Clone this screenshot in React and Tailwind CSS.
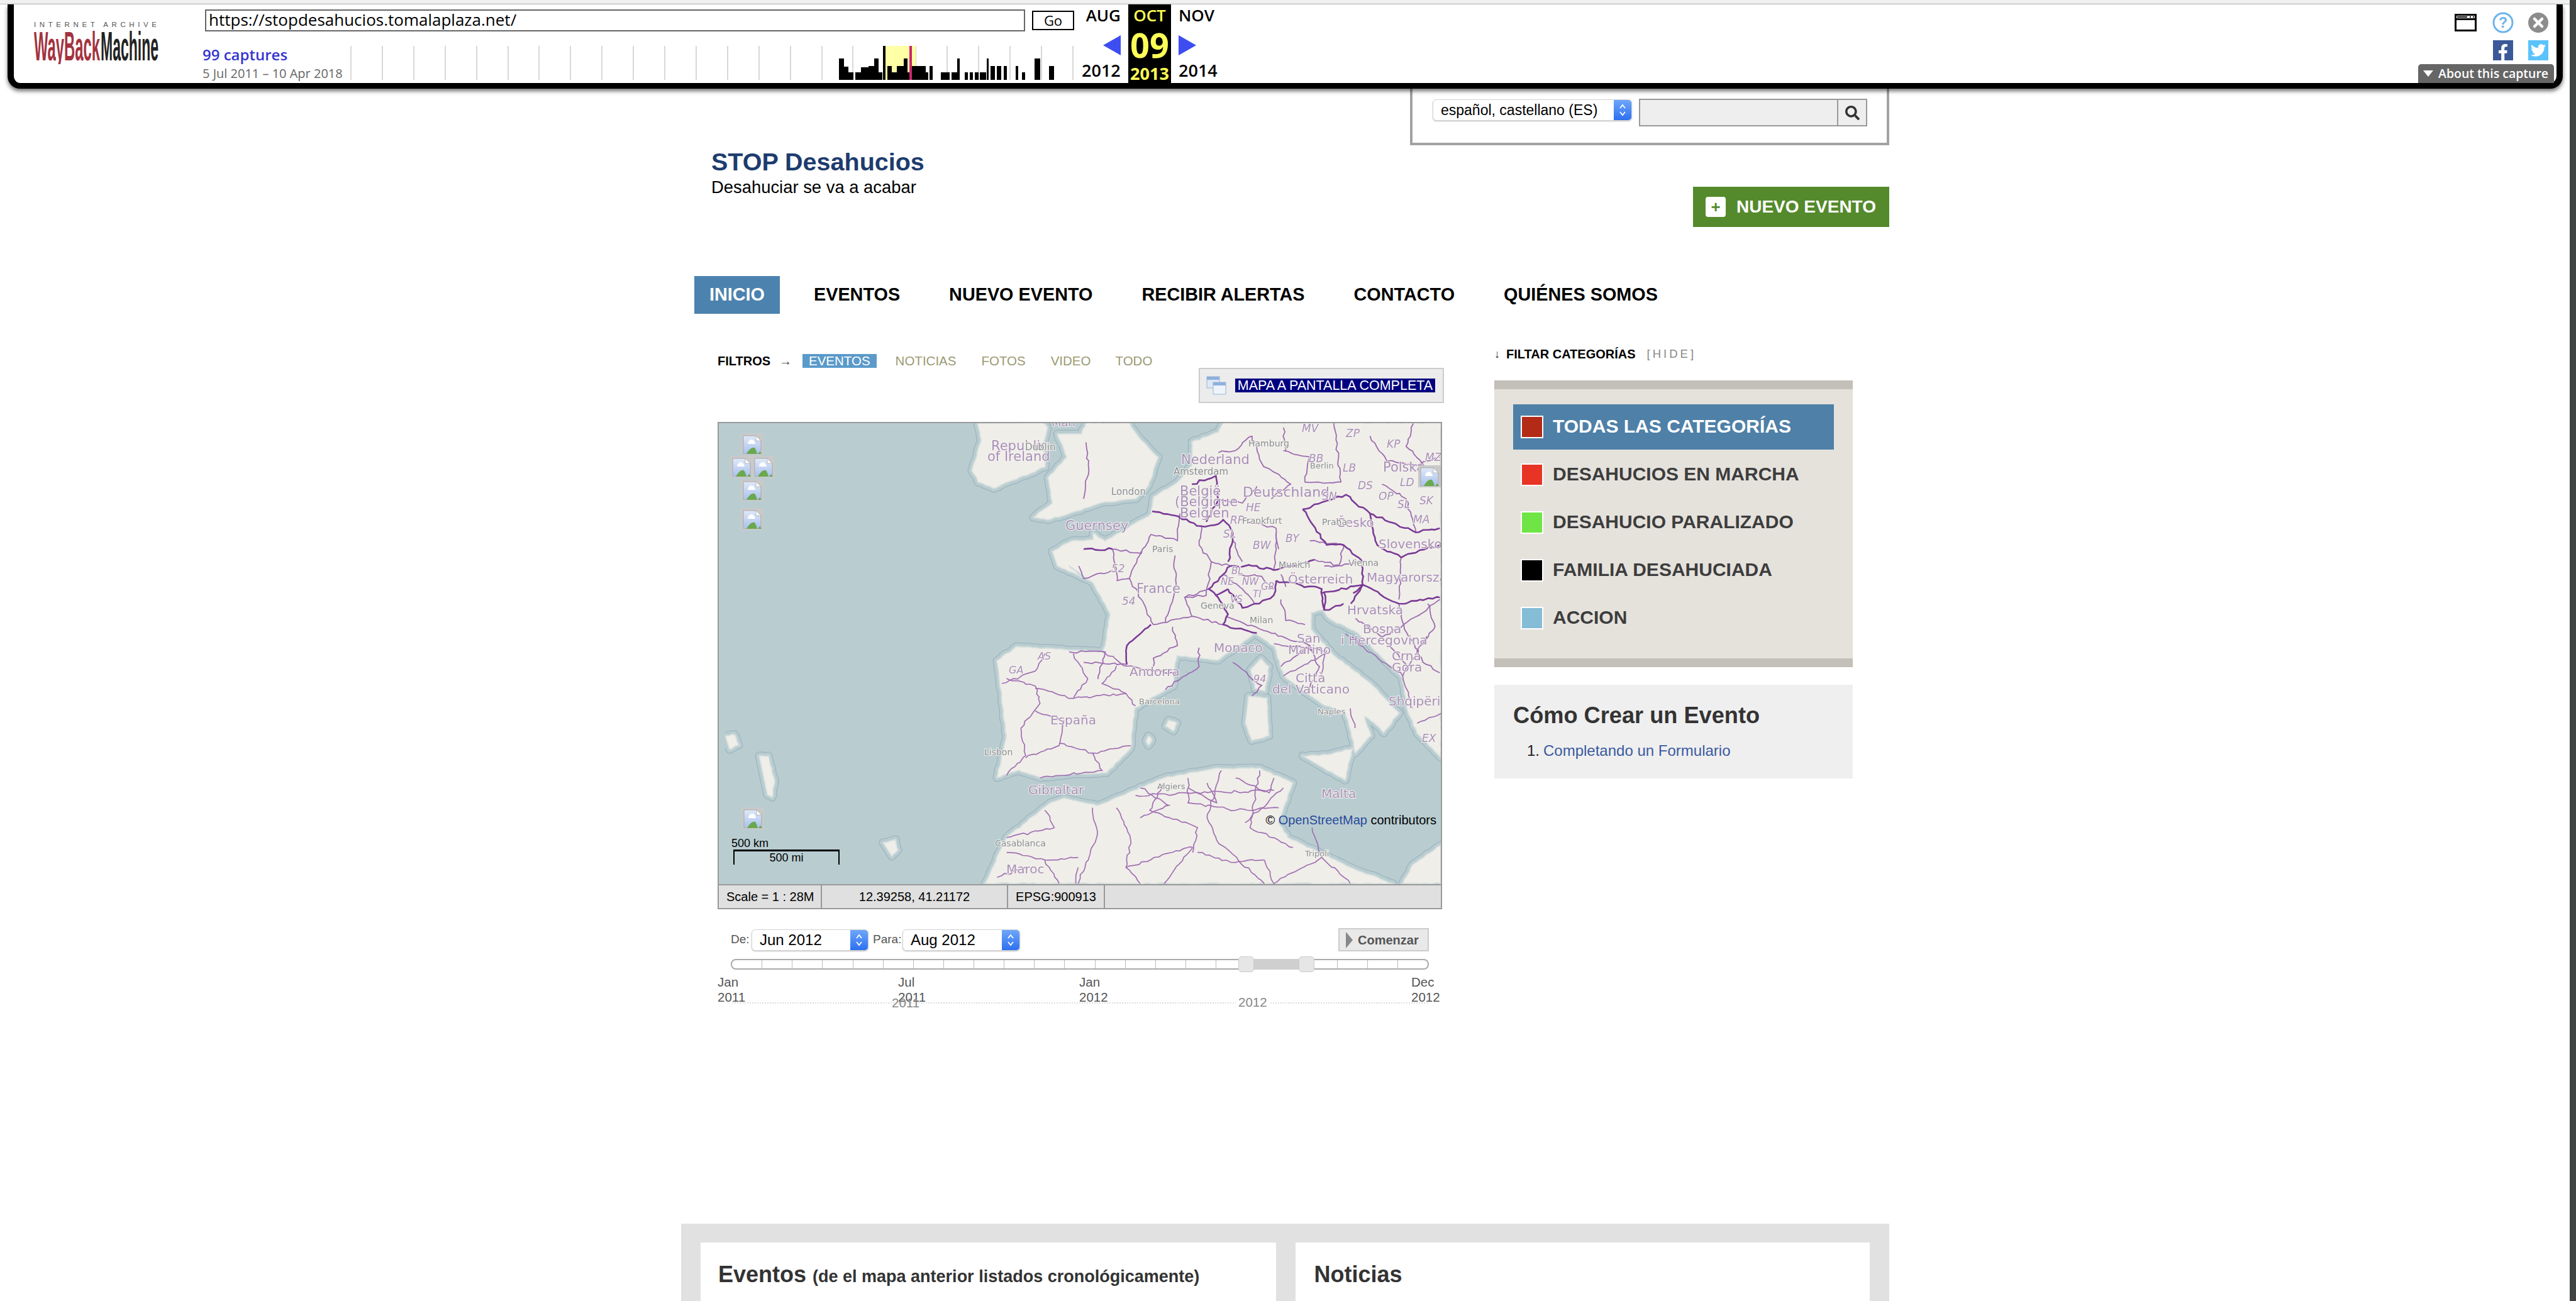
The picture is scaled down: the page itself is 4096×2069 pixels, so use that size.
import { FaFacebookF, FaTwitter, FaSearch } from "react-icons/fa";

const SERIF_FREE = "font-['Liberation_Sans',Arial,sans-serif]";
const TOOLBAR_FONT = "font-['Open_Sans',sans-serif]";

const crop10 = (x, y) => [1700 + x / 2.613, 660 + y / 3];
const crop7 = (x, y) => [1130 + x / 1.3176, 1000 + y / 2.53];

// jagged line through the points, so borders look like the rendered tiles
const wiggle = (pts, seed, amp = 4, closed = false) => {
  let r = (seed * 7919 + 13) % 233280;
  const rnd = () => {
    r = (r * 9301 + 49297) % 233280;
    return r / 233280 - 0.5;
  };
  let d = `M${pts[0][0].toFixed(1)} ${pts[0][1].toFixed(1)}`;
  for (let i = 1; i < pts.length; i++) {
    const [ax, ay] = pts[i - 1];
    const [bx, by] = pts[i];
    const n = Math.max(1, Math.ceil(Math.hypot(bx - ax, by - ay) / 7));
    for (let k = 1; k <= n; k++) {
      const t = k / n;
      const j = k === n ? 0 : amp;
      d += `L${(ax + (bx - ax) * t + rnd() * j).toFixed(1)} ${(ay + (by - ay) * t + rnd() * j).toFixed(1)}`;
    }
  }
  return closed ? d + "Z" : d;
};

const pairs = (arr, fn) => {
  const out = [];
  for (let i = 0; i < arr.length; i += 2) out.push(fn(arr[i], arr[i + 1]));
  return out;
};

const land = [
  // ireland
  [[1554, 673], [1560, 700], [1545, 748], [1555, 767], [1580, 777], [1627, 757], [1662, 743], [1660, 703], [1666, 680], [1658, 672]],
  // britain
  [[1681, 690], [1696, 727], [1666, 760], [1673, 800], [1643, 823], [1666, 827], [1700, 817], [1750, 800], [1807, 793], [1826, 773], [1842, 727], [1815, 700], [1796, 672], [1727, 672], [1719, 690]],
  // continent with spain and italy
  [[1673, 877], [1704, 860], [1738, 858], [1738, 847], [1757, 860], [1788, 843], [1830, 817], [1834, 790], [1872, 767], [1895, 740], [1895, 703], [1937, 687], [1945, 672], [2291, 672], [2291, 1205], [2253, 1166], [2238, 1130], [2230, 1079], [2192, 1040], [2159, 1007], [2115, 985], [2102, 970], [2085, 975], [2085, 1000], [2119, 1040], [2180, 1087], [2225, 1134], [2200, 1166], [2185, 1150], [2170, 1140], [2180, 1170], [2155, 1198], [2148, 1165], [2139, 1134], [2101, 1119], [2041, 1075], [2026, 1028], [1995, 1008], [1937, 1050], [1872, 1043], [1868, 1063], [1866, 1091], [1805, 1126], [1798, 1190], [1760, 1229], [1700, 1232], [1654, 1237], [1620, 1225], [1585, 1237], [1600, 1170], [1585, 1051], [1616, 1028], [1680, 1032], [1752, 1036], [1757, 1027], [1765, 977], [1738, 927], [1700, 900], [1723, 920], [1681, 900]],
  // corsica, sardinia, sicily
  [[2005, 1047], [2018, 1060], [2012, 1099], [1995, 1095], [1988, 1065]],
  [[1985, 1107], [2015, 1110], [2018, 1170], [1990, 1178], [1980, 1150]],
  [[2071, 1202], [2110, 1200], [2151, 1190], [2139, 1241], [2105, 1222]],
  // balearics
  [[1858, 1145], [1872, 1150], [1866, 1163], [1853, 1155]],
  [[1826, 1170], [1832, 1176], [1826, 1186], [1822, 1178]],
  // north africa
  [[1669, 1277], [1600, 1332], [1566, 1405], [2215, 1405], [2147, 1379], [2048, 1332], [2033, 1308], [2056, 1245], [2003, 1221], [1930, 1222], [1851, 1237], [1745, 1281], [1692, 1269]],
  [[2291, 1344], [2246, 1375], [2230, 1405], [2291, 1405]],
];

const islands = [
  [[1153, 1170], [1168, 1168], [1175, 1185], [1160, 1192]],
  [[1207, 1202], [1222, 1202], [1232, 1240], [1228, 1268], [1220, 1264]],
  [[1404, 1340], [1424, 1335], [1428, 1352], [1418, 1362]],
];

const majorBorders = [
  [345, 460, 440, 480, 500, 510, 550, 530, 620, 520, 640, 500, 680, 560, 680, 600, 660, 700],
  [510, 330, 610, 290, 620, 400, 570, 510],
  [670, 720, 760, 720, 850, 740, 1020, 690],
  [670, 720, 580, 830, 610, 860, 660, 830],
  [660, 830, 720, 920, 790, 900, 850, 860, 860, 790],
  [970, 450, 1070, 620, 1140, 620, 1220, 700, 1220, 810, 1050, 850],
  [970, 450, 1100, 400, 1150, 380, 1250, 470, 1280, 620, 1380, 680, 1540, 620],
  [1250, 470, 1440, 560, 1540, 540],
  [860, 790, 1050, 830, 1060, 930],
  [1220, 810, 1370, 900, 1540, 870],
  [610, 860, 660, 950, 640, 1000, 780, 1040],
  [240, 1190, 240, 1100, 340, 1000],
  [1060, 850, 1060, 930, 1140, 900],
  [1180, 850, 1220, 810, 1170, 900],
  [60, 640, 180, 640],
];

const minorBorders = [
  [180, 640, 300, 660, 340, 570, 450, 600, 460, 470],
  [180, 640, 200, 790, 250, 780, 300, 880, 350, 1000, 510, 960, 480, 870, 580, 830],
  [300, 650, 250, 780],
  [440, 670, 440, 830, 400, 990],
  [430, 1010, 450, 1100, 350, 1160, 350, 1200],
  [550, 530, 540, 620, 590, 700, 670, 720],
  [590, 700, 570, 860, 480, 870],
  [510, 960, 640, 1000],
  [760, 100, 800, 230, 920, 330, 840, 400],
  [890, 170, 1000, 200, 980, 320, 1130, 320],
  [620, 400, 720, 420, 780, 340],
  [740, 510, 860, 540, 870, 640],
  [680, 600, 720, 700],
  [850, 740, 860, 560],
  [1100, 40, 1130, 320],
  [1250, 100, 1320, 220, 1440, 240, 1540, 200],
  [1300, 330, 1400, 400, 1440, 560],
  [1190, 970, 1300, 1060, 1390, 1000, 1540, 880],
  [1370, 900, 1390, 1000, 1470, 1180, 1540, 1230],
  [1300, 1060, 1400, 1190],
  [790, 1020, 1000, 1100, 880, 1200],
  [790, 1020, 650, 960],
  [1000, 1100, 1040, 1200, 1000, 1300],
  [880, 880, 900, 980, 980, 1000],
  [40, 720, 60, 780, 180, 740],
  [70, 130, 80, 240, 60, 400],
  [760, 100, 690, 170, 620, 180],
  [890, 60, 900, 170],
  [1000, 600, 1140, 620, 1120, 720, 1060, 720],
  [1020, 690, 1130, 720, 1200, 700],
  [1380, 680, 1370, 880],
  [880, 760, 900, 820],
  [700, 760, 800, 770, 840, 830],
  [640, 760, 720, 830, 770, 900],
  [1430, 40, 1400, 150, 1490, 260, 1540, 300],
  [1490, 900, 1520, 1010, 1460, 1100],
  [0, 1130, 150, 1130, 120, 1260],
  [240, 1190, 60, 1180],
  [540, 1110, 540, 1200, 400, 1310],
  [680, 1180, 800, 1290, 760, 1340],
];

const spainAfrica = [
  [820, 90, 870, 150, 975, 180],
  [620, 200, 680, 230, 690, 300, 650, 400, 660, 510, 620, 590],
  [700, 100, 680, 170, 610, 220],
  [680, 240, 760, 280, 870, 260, 890, 310],
  [680, 330, 740, 370, 730, 470, 660, 520],
  [730, 460, 800, 500, 880, 470],
  [800, 500, 820, 570, 690, 600],
  [870, 260, 820, 220, 850, 150],
  [760, 100, 790, 200, 760, 280],
  [1180, 60, 1290, 90, 1280, 180],
  [1290, 100, 1230, 160, 1200, 190],
  [1340, 320, 1350, 400],
  [1330, 20, 1450, 190, 1470, 320],
  [1500, 30, 1450, 190],
  [1480, 380, 1530, 340],
  [800, 720, 810, 830, 770, 1025],
  [700, 730, 720, 800, 620, 840],
  [850, 720, 880, 850, 870, 960, 900, 1025],
  [950, 620, 920, 730, 1020, 800, 1010, 900],
  [1070, 570, 1040, 760, 1060, 850, 1160, 1025],
  [1150, 570, 1130, 800, 1220, 880],
  [1000, 600, 1000, 700, 1100, 730, 1190, 720],
  [890, 670, 1180, 650],
  [870, 960, 1000, 880, 1010, 880],
  [1020, 900, 1090, 940, 1160, 930],
  [1200, 640, 1120, 780],
  [620, 900, 700, 930, 770, 920],
  [700, 930, 730, 1025],
  [950, 1025, 1010, 880],
  [1160, 930, 1180, 1025, 1280, 920],
  [770, 960, 765, 1025],
  [900, 640, 960, 710, 900, 760],
  [1000, 640, 1060, 700, 1040, 620],
  [1100, 600, 1170, 660, 1180, 600],
  [1260, 800, 1280, 920, 1340, 1025],
  [600, 1000, 660, 960],
];

// text, x, y, size, style: c country, g city, i region
const labels = [
  ["Republic", 1576, 716, 21, "c"], ["of Ireland", 1570, 733, 21, "c"], ["Dublin", 1630, 716, 15, "g"], ["Man", 1672, 678, 18, "c"],
  ["Guernsey", 1694, 843, 21, "c"], ["London", 1767, 787, 15, "g"], ["Nederland", 1878, 738, 21, "c"], ["Amsterdam", 1866, 755, 15, "g"],
  ["België", 1876, 788, 21, "c"], ["(Belgique", 1868, 805, 21, "c"], ["Belgien", 1876, 823, 21, "c"], ["Deutschland", 1976, 790, 22, "c"],
  ["Hamburg", 1985, 710, 14, "g"], ["BB", 2081, 735, 17, "i"], ["Berlin", 2083, 745, 13, "g"], ["ZP", 2140, 695, 17, "i"], ["KP", 2205, 712, 17, "i"],
  ["MZ", 2266, 733, 17, "i"], ["MV", 2070, 687, 17, "i"], ["Polska", 2199, 750, 21, "c"], ["LD", 2226, 773, 17, "i"], ["DS", 2159, 778, 17, "i"], ["OP", 2192, 795, 17, "i"],
  ["SL", 2222, 808, 17, "i"], ["SK", 2257, 802, 17, "i"], ["MA", 2247, 832, 17, "i"], ["LB", 2135, 750, 17, "i"], ["HE", 1981, 813, 17, "i"], ["RP", 1956, 833, 17, "i"],
  ["Frankfurt", 1975, 833, 14, "g"], ["SL", 1945, 855, 17, "i"], ["BW", 1992, 873, 17, "i"], ["BY", 2044, 862, 17, "i"], ["SN", 2102, 795, 17, "i"],
  ["Česko", 2125, 838, 20, "c"], ["Praha", 2102, 835, 14, "g"], ["Slovensko", 2192, 872, 20, "c"], ["Magyarország", 2173, 925, 20, "c"],
  ["Österreich", 2048, 928, 20, "c"], ["Munich", 2033, 903, 14, "g"], ["Vienna", 2144, 900, 14, "g"], ["Paris", 1832, 878, 14, "g"], ["France", 1807, 943, 21, "c"],
  ["52", 1767, 910, 17, "i"], ["54", 1784, 962, 17, "i"], ["Geneva", 1909, 968, 14, "g"], ["Milan", 1987, 991, 14, "g"], ["BL", 1958, 913, 15, "i"],
  ["NE", 1941, 930, 15, "i"], ["NW", 1975, 930, 15, "i"], ["GR", 2005, 938, 15, "i"], ["VS", 1956, 958, 15, "i"], ["TI", 1992, 950, 15, "i"],
  ["Hrvatska", 2142, 977, 20, "c"], ["Bosna", 2167, 1007, 20, "c"], ["i Hercegovina", 2132, 1025, 20, "c"], ["Crna", 2213, 1050, 20, "c"], ["Gora", 2213, 1068, 20, "c"],
  ["San", 2062, 1022, 20, "c"], ["Marino", 2048, 1040, 20, "c"], ["Monaco", 1930, 1037, 20, "c"], ["Andorra", 1796, 1075, 20, "c"], ["Città", 2060, 1085, 20, "c"],
  ["del Vaticano", 2023, 1103, 20, "c"], ["94", 1993, 1085, 16, "i"], ["Barcelona", 1811, 1120, 13, "g"], ["Shqipëria", 2208, 1122, 20, "c"], ["España", 1670, 1152, 20, "c"],
  ["Lisbon", 1565, 1201, 14, "g"], ["GA", 1604, 1071, 16, "i"], ["AS", 1650, 1049, 16, "i"], ["Naples", 2095, 1136, 13, "g"], ["Gibraltar", 1635, 1263, 20, "c"],
  ["Malta", 2101, 1269, 20, "c"], ["Algiers", 1840, 1255, 13, "g"], ["Casablanca", 1582, 1346, 14, "g"], ["Maroc", 1600, 1389, 20, "c"], ["Tripoli", 2075, 1362, 13, "g"],
  ["EX", 2261, 1180, 17, "i"],
];

const BrokenImage = ({ className }) => (
  <div className={`absolute h-[35px] w-[36px] border-[2px] border-[#c9c9c9] bg-[#c9c9c9] overflow-hidden ${className}`}>
    <svg viewBox="0 0 32 31" className="block h-full w-full">
      <defs>
        <linearGradient id="skyBg" x1="0" y1="0" x2="0" y2="1">
          <stop offset="0" stopColor="#dfe8f8" />
          <stop offset="1" stopColor="#a9c1ec" />
        </linearGradient>
      </defs>
      <path d="M2 2H22L30 10V31H2Z" fill="url(#skyBg)" stroke="#a8a8a8" strokeWidth="1" />
      <path d="M22 2V10H30Z" fill="#fff" stroke="#a8a8a8" strokeWidth="0.8" />
      <path d="M9 15C9 11 12 8 15 8C18 8 20 11 21 15Z" fill="#fff" />
      <path d="M7 31C11 23 16 20 20 21C22 24 23 27 24 31Z" fill="#6aa84f" />
      <path d="M25 31L28 27L31 31Z" fill="#6aa84f" />
    </svg>
  </div>
);

const MapPicture = () => (
  <svg viewBox="1143 673 1148 733" className="absolute inset-0 h-full w-full">
    <defs>
      <filter id="tile" x="0" y="0" width="100%" height="100%">
        <feGaussianBlur stdDeviation="0.55" />
      </filter>
    </defs>
    <rect x="1143" y="673" width="1148" height="733" fill="#b9cdd1" />
    <g filter="url(#tile)">
      {[...land, ...islands].map((p, i) => (
        <path key={`h${i}`} d={wiggle(p, i + 1, 2, true)} fill="#9db3bd" stroke="#9db3bd" strokeWidth="13" strokeLinejoin="round" />
      ))}
      {[...land, ...islands].map((p, i) => (
        <path key={`s${i}`} d={wiggle(p, i + 1, 2, true)} fill="#b9cdd1" stroke="#b9cdd1" strokeWidth="10.5" strokeLinejoin="round" />
      ))}
      {[...land, ...islands].map((p, i) => (
        <path key={`l${i}`} d={wiggle(p, i + 1, 2, true)} fill="#f0eee9" stroke="#d4dedc" strokeWidth="2" strokeLinejoin="round" />
      ))}
      {minorBorders.map((b, i) => (
        <path key={`m${i}`} d={wiggle(pairs(b, crop10), i + 40)} fill="none" stroke="#9c6cb0" strokeWidth="1.8" />
      ))}
      {majorBorders.map((b, i) => (
        <path key={`M${i}`} d={wiggle(pairs(b, crop10), i + 70)} fill="none" stroke="#7a3a96" strokeWidth="2.6" />
      ))}
      {spainAfrica.map((b, i) => (
        <path key={`a${i}`} d={wiggle(pairs(b, crop7), i + 100)} fill="none" stroke="#a070b2" strokeWidth="1.7" />
      ))}
      {labels.map(([t, x, y, size, kind], i) => (
        <text
          key={`t${i}`}
          x={x}
          y={y}
          fontSize={size}
          fontFamily="'DejaVu Sans', sans-serif"
          fontStyle={kind === "i" ? "italic" : "normal"}
          fill={kind === "g" ? "#8a8f92" : "#a88fb8"}
          stroke="#f4f2ee"
          strokeWidth="2"
          paintOrder="stroke"
        >
          {t}
        </text>
      ))}
    </g>
  </svg>
);

const MacSelect = ({ label, width, textSize }) => (
  <div className={`flex h-[34px] ${width} overflow-hidden rounded-[6px] border border-[#d4d4d4] bg-white shadow-[0_1px_2px_rgba(0,0,0,0.25)]`}>
    <span className={`flex-1 truncate pl-[12px] leading-[32px] text-black ${textSize}`}>{label}</span>
    <span className="flex w-[28px] items-center justify-center bg-gradient-to-b from-[#6ea6fa] to-[#2d6ff0]">
      <svg viewBox="0 0 14 24" className="h-[24px] w-[14px]" fill="none" stroke="#fff" strokeWidth="1.8">
        <path d="M3 9L7 4L11 9" />
        <path d="M3 15L7 20L11 15" />
      </svg>
    </span>
  </div>
);

const sparkBars = [
  [523, 537, 280], [537, 547, 318], [547, 560, 345], [565, 578, 345], [578, 598, 322], [598, 612, 315], [612, 622, 280], [622, 632, 345], [633, 640, 218],
  [645, 655, 315], [655, 668, 345], [668, 685, 315], [685, 695, 280], [695, 700, 345], [706, 720, 315], [720, 740, 315], [740, 747, 345], [750, 758, 315],
  [778, 800, 345], [805, 818, 345], [818, 824, 280], [838, 845, 345], [850, 858, 345], [862, 872, 345], [875, 890, 345], [892, 897, 280], [902, 912, 315],
  [918, 928, 315], [935, 942, 315], [965, 970, 315], [980, 988, 345], [1012, 1025, 280], [1047, 1060, 315],
];

const Sparkline = () => (
  <svg viewBox="557 73 1151 54" className="block h-[54px] w-[1151px]" shapeRendering="crispEdges">
    {Array.from({ length: 24 }, (_, i) => (
      <rect key={i} x={557 + i * 49.9} y="73" width="2" height="54" fill="#d8d8d8" />
    ))}
    <rect x="1408" y="73" width="48" height="54" fill="#ffffa5" />
    {sparkBars.map(([a, b, top], i) => (
      <rect key={i} x={1000 + a / 1.568} y={top / 3} width={(b - a) / 1.568} height={127 - top / 3} fill="#000" />
    ))}
    <rect x="1446" y="73" width="4" height="54" fill="#d0246e" />
  </svg>
);

const WaybackLogo = () => (
  <svg viewBox="0 0 198 70" className="h-[70px] w-[198px]">
    <text x="0" y="11" fontSize="11.5" fontFamily="'Liberation Sans', sans-serif" letterSpacing="3" fill="#555" textLength="198" lengthAdjust="spacing">
      INTERNET ARCHIVE
    </text>
    <text x="0" y="64" fontSize="64" fontWeight="700" fontFamily="'Liberation Sans', sans-serif" fill="#a3333f" textLength="105" lengthAdjust="spacingAndGlyphs">
      WayBack
    </text>
    <text x="106" y="64" fontSize="64" fontWeight="700" fontFamily="'Liberation Sans', sans-serif" fill="#222" textLength="92" lengthAdjust="spacingAndGlyphs">
      Machine
    </text>
  </svg>
);

const Toolbar = () => (
  <div className={`relative z-10 ml-[12px] mr-[11px] flex h-[134px] rounded-b-[20px] border-x-[10px] border-b-[9px] border-black bg-white shadow-[0_4px_6px_rgba(0,0,0,0.55)] ${TOOLBAR_FONT}`}>
    <div className="ml-[32px] mt-[25px] w-[268px] shrink-0">
      <WaybackLogo />
    </div>
    <div className="w-[1386px] shrink-0 pt-[8px]">
      <div className="flex items-center">
        <div className="ml-[4px] h-[35px] w-[1304px] border-[2px] border-[#666] pl-[4px] text-[26px] leading-[29px] text-black">
          https://stopdesahucios.tomalaplaza.net/
        </div>
        <div className="ml-[11px] h-[31px] w-[67px] border-[2px] border-black text-center text-[22px] leading-[26px] text-black">Go</div>
      </div>
      <div className="mt-[23px] flex">
        <div className="w-[235px] shrink-0">
          <div className="text-[24px] font-semibold leading-[28px] text-[#3535d0]">99 captures</div>
          <div className="mt-[5px] whitespace-nowrap text-[20px] leading-[22px] text-[#666]">5 Jul 2011 – 10 Apr 2018</div>
        </div>
        <Sparkline />
      </div>
    </div>
    <div className="ml-[12px] w-[74px] shrink-0 pt-[4px] text-black">
      <div className="pr-[12px] text-right text-[26px] font-semibold leading-[26px]">AUG</div>
      <div className="mt-[19px] flex justify-end pr-[12px]">
        <div className="h-0 w-0 border-y-[16px] border-r-[28px] border-y-transparent border-r-[#3d4df2]" />
      </div>
      <div className="mt-[12px] text-[27px] font-semibold leading-[24px]">2012</div>
    </div>
    <div className="flex w-[68px] shrink-0 flex-col items-center bg-black pt-[4px] text-[#ffff55]">
      <div className="text-[26px] font-semibold leading-[26px]">OCT</div>
      <div className="mt-[8px] text-[54px] font-bold leading-[52px]">09</div>
      <div className="mt-[8px] text-[27px] font-bold leading-[24px]">2013</div>
    </div>
    <div className="ml-[12px] w-[74px] shrink-0 pt-[4px] text-black">
      <div className="text-[26px] font-semibold leading-[26px]">NOV</div>
      <div className="mt-[19px] flex">
        <div className="h-0 w-0 border-y-[16px] border-l-[28px] border-y-transparent border-l-[#3d4df2]" />
      </div>
      <div className="mt-[12px] text-[27px] font-semibold leading-[24px]">2014</div>
    </div>
    <div className="ml-auto mr-[13px] w-[149px] shrink-0 pt-[12px]">
      <div className="flex items-center justify-between">
        <svg viewBox="0 0 35 28" className="h-[28px] w-[35px]" fill="none" stroke="#000" strokeWidth="3">
          <rect x="1.5" y="1.5" width="32" height="25" />
          <path d="M1.5 8.5H33.5" />
          <path d="M4 5H20M24 5H26M29 5H31" strokeWidth="2" />
        </svg>
        <svg viewBox="0 0 34 34" className="ml-[25px] h-[34px] w-[34px]">
          <circle cx="17" cy="17" r="15" fill="#fff" stroke="#6cb4ec" strokeWidth="3" />
          <text x="17" y="25" textAnchor="middle" fontSize="23" fontWeight="700" fontFamily="'Liberation Sans', sans-serif" fill="#6cb4ec">?</text>
        </svg>
        <svg viewBox="0 0 32 32" className="ml-[23px] h-[32px] w-[32px]">
          <circle cx="16" cy="16" r="16" fill="#8c8c8c" />
          <path d="M10 10L22 22M22 10L10 22" stroke="#fff" strokeWidth="4.5" strokeLinecap="round" />
        </svg>
      </div>
      <div className="mt-[11px] flex justify-end gap-[24px]">
        <div className="flex h-[32px] w-[32px] items-end justify-center bg-[#3b5998] text-white">
          <FaFacebookF className="h-[26px] w-[26px]" />
        </div>
        <div className="flex h-[32px] w-[32px] items-center justify-center bg-[#5bc3fb] text-white">
          <FaTwitter className="h-[24px] w-[24px]" />
        </div>
      </div>
    </div>
    <div className="absolute bottom-0 right-[4px] flex h-[30px] w-[216px] items-center gap-[8px] rounded-t-[5px] bg-[#666] pl-[8px] text-[19.5px] font-semibold text-white">
      <span className="h-0 w-0 border-x-[8px] border-t-[10px] border-x-transparent border-t-white" />
      <span className="whitespace-nowrap">About this capture</span>
    </div>
  </div>
);

const navItems = ["INICIO", "EVENTOS", "NUEVO EVENTO", "RECIBIR ALERTAS", "CONTACTO", "QUIÉNES SOMOS"];

const Header = () => (
  <>
    <div className="flex">
      <div className="ml-auto h-[90px] w-[762px] border-x-[4px] border-b-[4px] border-[#a2a2a2]">
        <div className="flex items-start pl-[32px] pt-[17px]">
          <MacSelect label="español, castellano (ES)" width="w-[317px]" textSize="text-[23px]" />
          <div className="ml-[11px] -mt-[1px] flex h-[44px] w-[363px] border-[2px] border-[#999] bg-[#eee]">
            <div className="flex-1" />
            <div className="flex w-[46px] items-center justify-center border-l-[2px] border-[#999] text-[#333]">
              <FaSearch className="h-[23px] w-[23px]" />
            </div>
          </div>
        </div>
      </div>
    </div>
    <div className="flex h-[208px] items-start pl-[48px]">
      <div className="pt-[7px]">
        <h1 className="text-[39.5px] font-bold leading-[39px] text-[#1d3c6e]">STOP Desahucios</h1>
        <p className="mt-[7px] text-[27.4px] leading-[27px] text-black">Desahuciar se va a acabar</p>
      </div>
      <div className="ml-auto mt-[66px] flex h-[64px] w-[312px] items-center bg-[#548a2c] pl-[20px]">
        <span className="flex h-[32px] w-[32px] items-center justify-center rounded-[4px] bg-white text-[26px] font-bold leading-none text-[#548a2c]">+</span>
        <span className="ml-[17px] whitespace-nowrap text-[28px] font-bold text-white">NUEVO EVENTO</span>
      </div>
    </div>
    <nav className="ml-[21px] flex h-[60px] gap-[30px]">
      {navItems.map((item, i) => (
        <a key={item} className={`flex items-center px-[24px] text-[28.8px] font-bold ${i === 0 ? "bg-[#4c82ae] text-white" : "text-black"}`}>
          {item}
        </a>
      ))}
    </nav>
  </>
);

const FilterRow = () => (
  <div className="flex h-[22px] items-center text-[20.5px]">
    <span className="w-[103px] whitespace-nowrap text-[20px] font-bold text-black">
      FILTROS
      <span className="ml-[14px] font-normal text-[#444]">→</span>
    </span>
    <span className="ml-[32px] bg-[#5b9aca] px-[10px] leading-[22px] text-white">EVENTOS</span>
    <span className="ml-[30px] text-[#9a9a72]">NOTICIAS</span>
    <span className="ml-[40px] text-[#9a9a72]">FOTOS</span>
    <span className="ml-[40px] text-[#9a9a72]">VIDEO</span>
    <span className="ml-[39px] text-[#9a9a72]">TODO</span>
  </div>
);

const MapPanel = () => (
  <div className="mt-[30px] w-[1152px] border-[2px] border-[#999]">
    <div className="relative h-[733px] overflow-hidden">
      <MapPicture />
      <BrokenImage className="left-[35px] top-[16px]" />
      <BrokenImage className="left-[18px] top-[52px]" />
      <BrokenImage className="left-[53px] top-[52px]" />
      <BrokenImage className="left-[35px] top-[89px]" />
      <BrokenImage className="left-[35px] top-[135px]" />
      <BrokenImage className="left-[36px] top-[611px]" />
      <BrokenImage className="left-[1112px] top-[67px]" />
      <div className="absolute left-[20px] top-[658px] text-[18px] leading-[20px] text-black">500 km</div>
      <div className="absolute left-[23px] top-[678px] h-[24px] w-[169px] border-x-[2px] border-t-[3px] border-black text-center text-[18px] leading-[21px] text-black">500 mi</div>
      <div className="absolute right-[7px] top-[620px] text-[20px] leading-[22px] text-black">
        © <span className="text-[#2a4a9a]">OpenStreetMap</span> contributors
      </div>
    </div>
    <div className="flex h-[38px] border-t-[2px] border-[#999] bg-[#e0e0e0] text-[20px] leading-[36px] text-black">
      <span className="w-[164px] border-r-[2px] border-[#999] pl-[12px]">Scale = 1 : 28M</span>
      <span className="w-[296px] border-r-[2px] border-[#999] text-center">12.39258, 41.21172</span>
      <span className="w-[154px] border-r-[2px] border-[#999] text-center">EPSG:900913</span>
    </div>
  </div>
);

const TimeSlider = () => (
  <>
    <div className="mx-[21px] mt-[30px] flex h-[37px] items-center text-[19px] text-[#555]">
      <span className="w-[33px]">De:</span>
      <MacSelect label="Jun 2012" width="w-[186px]" textSize="text-[24px]" />
      <span className="ml-[7px] w-[47px]">Para:</span>
      <MacSelect label="Aug 2012" width="w-[187px]" textSize="text-[24px]" />
      <div className="ml-auto flex h-[37px] w-[144px] items-center border-[2px] border-[#ccc] bg-[#e9e9e9] pl-[10px]">
        <span className="h-0 w-0 border-y-[13px] border-l-[11px] border-y-transparent border-l-[#888]" />
        <span className="ml-[8px] text-[20px] font-bold text-[#555]">Comenzar</span>
      </div>
    </div>
    <div className="relative mx-[21px] mt-[12px] h-[17px]">
      <div className="flex h-full overflow-hidden rounded-[8px] border-[2px] border-[#aaa] bg-white">
        {Array.from({ length: 23 }, (_, i) => (
          <span key={i} className="flex-1 border-r-[1.5px] border-[#bbb] last:border-r-0" />
        ))}
      </div>
      <div className="absolute left-[819px] top-0 h-[17px] w-[96px] bg-[#cfcfcf]" />
      <div className="absolute left-[807px] -top-[4px] h-[25px] w-[25px] rounded-[5px] border border-[#ccc] bg-[#e6e6e6]" />
      <div className="absolute left-[903px] -top-[4px] h-[25px] w-[25px] rounded-[5px] border border-[#ccc] bg-[#e6e6e6]" />
    </div>
    <div className="relative mt-[8px] h-[47px] w-[1152px] text-[20.5px] leading-[24px] text-[#555]">
      <div className="absolute inset-x-[23px] bottom-[1px] border-b-[2px] border-dotted border-[#ddd]" />
      <div className="relative grid grid-cols-[287px_288px_528px_1fr]">
        <span>Jan<br />2011</span>
        <span>Jul<br />2011</span>
        <span>Jan<br />2012</span>
        <span>Dec<br />2012</span>
      </div>
      <span className="absolute left-[277px] top-[33px] text-[#888]">2011</span>
      <span className="absolute left-[824px] top-[32px] bg-white px-[4px] text-[#888]">2012</span>
    </div>
  </>
);

const categories = [
  { label: "TODAS LAS CATEGORÍAS", swatch: "bg-[#b32a17]", active: true },
  { label: "DESAHUCIOS EN MARCHA", swatch: "bg-[#e83424]" },
  { label: "DESAHUCIO PARALIZADO", swatch: "bg-[#6fe445]" },
  { label: "FAMILIA DESAHUCIADA", swatch: "bg-black" },
  { label: "ACCION", swatch: "bg-[#85bcd6]" },
];

const Sidebar = () => (
  <div className="ml-[83px] w-[570px] pt-[52px]">
    <div className="flex h-[24px] items-center whitespace-nowrap">
      <span className="w-[19px] text-[18px] font-bold text-[#333]">↓</span>
      <span className="text-[20px] font-bold text-black">FILTAR CATEGORÍAS</span>
      <span className="ml-[18px] text-[18.5px] tracking-[4px] text-[#888]">[HIDE]</span>
    </div>
    <div className="mt-[30px] flex h-[456px] flex-col gap-[4px] border-y-[14px] border-[#c3bfb9] bg-[#e5e2dc] px-[30px] pt-[24px]">
      {categories.map((cat) => (
        <div key={cat.label} className={`flex h-[72px] shrink-0 items-center pl-[12px] ${cat.active ? "bg-[#4e80a8] text-white" : "text-[#3d3d3d]"}`}>
          <span className={`h-[36px] w-[36px] border-[2px] border-white ${cat.swatch}`} />
          <span className="ml-[15px] whitespace-nowrap pb-[3px] text-[30px] font-bold">{cat.label}</span>
        </div>
      ))}
    </div>
    <div className="mt-[28px] h-[149px] bg-[#efefef] px-[30px] pt-[29px]">
      <h3 className="whitespace-nowrap text-[36.2px] font-bold leading-[40px] text-[#333]">Cómo Crear un Evento</h3>
      <div className="mt-[22px] flex pl-[22px] text-[24px] leading-[28px]">
        <span className="w-[26px] text-[#222]">1.</span>
        <a className="text-[#3a5aa0]">Completando un Formulario</a>
      </div>
    </div>
  </div>
);

const BottomPanels = () => (
  <div className="mt-[349px] flex h-[200px] gap-[31px] bg-[#e1e1e1] px-[31px] pt-[30px]">
    <div className="w-[915px] bg-white pl-[28px] pt-[29px]">
      <h2 className="whitespace-nowrap text-[36px] font-bold leading-[44px] text-[#333]">
        Eventos <span className="text-[27px]">(de el mapa anterior listados cronológicamente)</span>
      </h2>
    </div>
    <div className="w-[914px] bg-white pl-[30px] pt-[29px]">
      <h2 className="text-[36px] font-bold leading-[44px] text-[#333]">Noticias</h2>
    </div>
  </div>
);

const App = () => (
  <div className={`flex h-[2069px] w-[4096px] overflow-hidden bg-white ${SERIF_FREE}`}>
    <div className="w-[4086px] shrink-0">
      <div className="h-[7px] border-b-[1px] border-[#bcbcbc] bg-[#f0f0f0]" />
      <Toolbar />
      <div className="ml-[1083px] w-[1921px]">
        <Header />
        <div className="flex items-start pl-[58px]">
          <div className="w-[1152px] pt-[64px]">
            <FilterRow />
            <div className="flex justify-end">
              <div className="-mr-[3px] flex h-[56px] w-[390px] items-center border-[2px] border-[#ccc] bg-[#ececec] pl-[10px]">
                <svg viewBox="0 0 32 30" className="h-[30px] w-[32px]">
                  <rect x="1" y="1" width="20" height="18" fill="#dde7f5" stroke="#9db4d6" />
                  <rect x="1" y="1" width="20" height="5" fill="#8fb0dc" />
                  <rect x="11" y="10" width="20" height="19" fill="#eef3fa" stroke="#9db4d6" />
                  <rect x="11" y="10" width="20" height="5" fill="#8fb0dc" />
                </svg>
                <span className="ml-[14px] flex h-[22px] w-[318px] items-center justify-center whitespace-nowrap bg-[#000080] text-[21.5px] text-white">
                  MAPA A PANTALLA COMPLETA
                </span>
              </div>
            </div>
            <MapPanel />
            <TimeSlider />
          </div>
          <Sidebar />
        </div>
        <BottomPanels />
      </div>
    </div>
    <div className="flex-1 bg-[#424345]" />
  </div>
);

export default App;
